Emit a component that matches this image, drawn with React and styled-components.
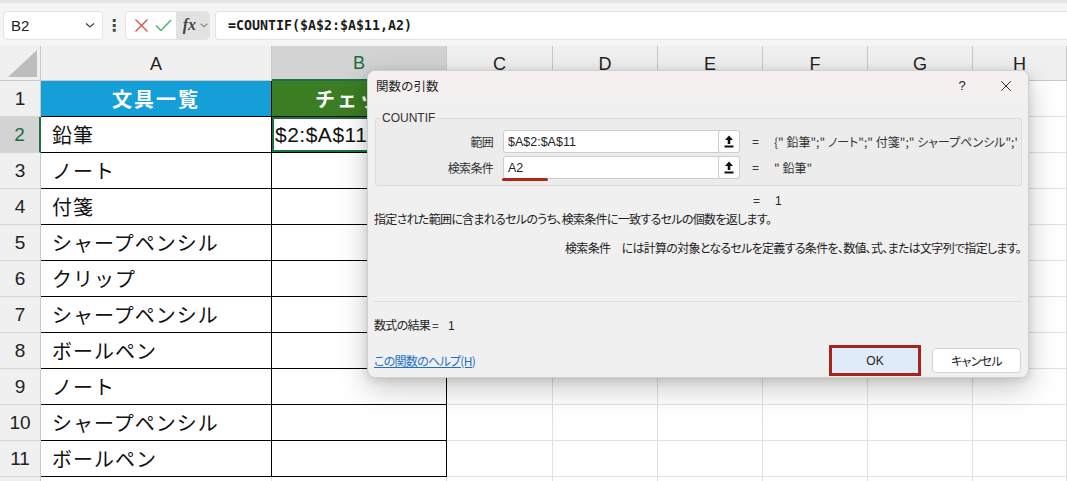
import React from "react";
import styled, { createGlobalStyle, css } from "styled-components";

const GlobalStyle = createGlobalStyle`
  html, body {
    margin: 0;
    padding: 0;
    background: #ffffff;
    overflow: hidden;
  }
  body {
    font-family: "Noto Sans CJK JP", "Noto Sans", sans-serif;
  }
  * {
    box-sizing: border-box;
  }
`;

const jp = `"Noto Sans CJK JP", "Noto Sans", sans-serif`;

const Screen = styled.div`
  position: relative;
  width: 1067px;
  height: 481px;
  overflow: hidden;
  background: #fff;
`;

/* ---------- formula bar ---------- */

const FormulaBar = styled.div`
  display: flex;
  align-items: center;
  height: 46px;
  padding: 1px 0 0 3px;
  background: #f5f5f5;
  border-top: 3px solid #e4e4e4;
`;

const NameBox = styled.div`
  display: flex;
  align-items: center;
  justify-content: space-between;
  width: 100px;
  height: 29px;
  padding: 0 6px 0 7px;
  background: #fff;
  border: 1px solid #e3e3e3;
  border-radius: 4px;
  font-family: "Liberation Sans", sans-serif;
  font-size: 15px;
  color: #222;
`;

const Dots = styled.div`
  width: 22px;
  text-align: center;
  font-size: 16px;
  font-weight: bold;
  color: #444;
  font-family: "DejaVu Sans", sans-serif;
`;

const IconBox = styled.div`
  display: flex;
  align-items: center;
  width: 85px;
  height: 29px;
  padding-left: 4px;
  background: #fff;
  border: 1px solid #e3e3e3;
  border-radius: 4px;
  overflow: hidden;
`;

const IconSlot = styled.div`
  width: 24px;
  display: flex;
  justify-content: center;
`;

const FxButton = styled.div`
  display: flex;
  align-items: center;
  gap: 3px;
  height: 100%;
  margin-left: 1px;
  padding-left: 7px;
  flex: 1;
  background: #e2e2e2;
  font-family: "Liberation Serif", serif;
  font-style: italic;
  font-weight: bold;
  font-size: 16px;
  color: #444;
`;

const FormulaInput = styled.div`
  flex: 1;
  height: 29px;
  margin-left: 5px;
  padding-left: 12px;
  display: flex;
  align-items: center;
  background: #fff;
  border: 1px solid #e3e3e3;
  border-right: none;
  border-radius: 4px 0 0 4px;
  font-family: "DejaVu Sans Mono", monospace;
  font-weight: bold;
  font-size: 13.3px;
  color: #1a1a1a;
`;

/* ---------- sheet ---------- */

const Sheet = styled.div`
  display: grid;
  grid-template-columns: 41px 231px 175px 106px 105px 105px 105px 105px 1fr;
  grid-template-rows: 35px repeat(12, 36px);
`;

const Corner = styled.div`
  position: relative;
  background: #f0f0f0;
  border-right: 1px solid #c9c9c9;
  border-bottom: 1px solid #c9c9c9;
  &::after {
    content: "";
    position: absolute;
    right: 3px;
    bottom: 3px;
    width: 29px;
    height: 27px;
    background: #bdbdbd;
    clip-path: polygon(100% 0, 100% 100%, 0 100%);
  }
`;

const ColHead = styled.div`
  display: flex;
  align-items: center;
  justify-content: center;
  background: ${(p) => (p.$active ? "#d3d3d3" : "#f0f0f0")};
  color: ${(p) => (p.$active ? "#1e6b3a" : "#222")};
  border-right: 1px solid #c9c9c9;
  border-bottom: ${(p) => (p.$active ? "2px solid #1e7145" : "1px solid #c9c9c9")};
  font-family: "Liberation Sans", sans-serif;
  font-size: 18px;
  padding-top: 2px;
`;

const RowHead = styled.div`
  display: flex;
  align-items: center;
  justify-content: center;
  background: ${(p) => (p.$active ? "#d3d3d3" : "#f0f0f0")};
  color: ${(p) => (p.$active ? "#1e6b3a" : "#222")};
  border-right: ${(p) => (p.$active ? "2px solid #1e7145" : "1px solid #c9c9c9")};
  border-bottom: 1px solid #d6d6d6;
  font-family: "Liberation Sans", sans-serif;
  font-size: 19px;
`;

const Cell = styled.div`
  display: flex;
  align-items: center;
  overflow: hidden;
  white-space: nowrap;
  padding-left: 11px;
  font-family: ${jp};
  font-size: 20px;
  letter-spacing: 1px;
  color: #111;
  border-right: 1px solid ${(p) => (p.$table ? "#000" : "#e1e1e1")};
  border-bottom: 1px solid ${(p) => (p.$table ? "#000" : "#e1e1e1")};
  background: ${(p) => p.$fill || "#fff"};
  ${(p) =>
    p.$header &&
    css`
      justify-content: center;
      padding-left: 0;
      color: #fff;
      font-weight: bold;
      letter-spacing: 2px;
    `}
  ${(p) =>
    p.$active &&
    css`
      box-shadow: inset 0 0 0 2px #1e7145;
      padding-left: 3px;
      font-family: "Liberation Sans", sans-serif;
      font-size: 21px;
      letter-spacing: 0.5px;
    `}
`;

/* ---------- dialog ---------- */

const Dialog = styled.div`
  position: absolute;
  left: 367px;
  top: 70px;
  width: 662px;
  height: 308px;
  display: flex;
  flex-direction: column;
  background: #f0f0f0;
  border: 1px solid #cfcfcf;
  border-radius: 8px;
  box-shadow: 0 10px 30px rgba(0, 0, 0, 0.22), 0 2px 8px rgba(0, 0, 0, 0.12);
  font-family: ${jp};
  font-size: 12px;
  line-height: 16px;
  letter-spacing: -0.7px;
  color: #222;
  font-feature-settings: "palt";
  overflow: hidden;
`;

const TitleBar = styled.div`
  display: flex;
  align-items: center;
  height: 30px;
  padding-left: 8px;
  background: #f4f0f0;
  font-size: 12.5px;
  letter-spacing: 0;
  font-feature-settings: normal;
`;

const TitleText = styled.div`
  flex: 1;
`;

const TitleButton = styled.div`
  width: 44px;
  display: flex;
  justify-content: center;
  font-family: "Liberation Sans", sans-serif;
  font-size: 13px;
  color: #222;
`;

const Body = styled.div`
  display: flex;
  flex-direction: column;
  flex: 1;
  padding: 0 6px 0 6px;
`;

const Group = styled.fieldset`
  margin: 9px 0 0 1px;
  padding: 4px 0 0 0;
  height: 76px;
  width: 647px;
  border: 1px solid #dcdcdc;
  border-radius: 2px;
  background: #ececec;
  overflow: hidden;
  min-width: 0;
`;

const Legend = styled.legend`
  margin-left: 4px;
  padding: 0 2px;
  font-family: "Liberation Sans", sans-serif;
  font-size: 12px;
  letter-spacing: 0;
  color: #333;
`;

const ArgRow = styled.div`
  display: flex;
  align-items: center;
  height: 23px;
  margin-bottom: 3px;
`;

const ArgLabel = styled.div`
  flex-shrink: 0;
  width: 127px;
  text-align: right;
  padding-right: 10px;
  color: #333;
`;

const ArgInput = styled.div`
  position: relative;
  flex-shrink: 0;
  display: flex;
  align-items: center;
  width: 237px;
  height: 23px;
  padding-left: 4px;
  background: #fff;
  border: 1px solid #cdcdcd;
  border-radius: 3px;
  font-family: "Liberation Sans", sans-serif;
  font-size: 12.5px;
  letter-spacing: 0;
  color: #222;
`;

const RefButton = styled.div`
  position: absolute;
  right: -1px;
  top: -1px;
  width: 22px;
  height: 23px;
  display: flex;
  align-items: center;
  justify-content: center;
  background: #fff;
  border: 1px solid #cdcdcd;
  border-radius: 3px;
`;

const Marker = styled.div`
  position: absolute;
  left: -2px;
  bottom: -3px;
  width: 46px;
  height: 3px;
  border-radius: 2px;
  background: #b0261c;
`;

const Eq = styled.div`
  width: 34px;
  padding-left: 12px;
  flex-shrink: 0;
  font-family: "Liberation Sans", sans-serif;
  letter-spacing: 0;
  color: #333;
`;

const ArgValue = styled.div`
  min-width: 0;
  white-space: nowrap;
  overflow: hidden;
  letter-spacing: 0;
  color: #333;
`;

const ResultRow = styled.div`
  display: flex;
  height: 16px;
  margin: 7px 0 0 367px;
  font-family: "Liberation Sans", sans-serif;
`;

const Text = styled.div`
  height: 16px;
  white-space: nowrap;
  margin-top: ${(p) => p.$top || 0}px;
  text-align: ${(p) => p.$align || "left"};
  padding-right: ${(p) => p.$pr || 0}px;
`;

const ResultValue = styled.span`
  margin-left: 10px;
  font-family: "Liberation Sans", sans-serif;
  letter-spacing: 0;
`;

const Separator = styled.div`
  height: 1px;
  margin: 45px 0 0 0;
  background: #e0e0e0;
`;

const Footer = styled.div`
  display: flex;
  align-items: center;
  margin-top: 12px;
  padding-right: 1px;
`;

const HelpLink = styled.a`
  flex: 1;
  color: #1a6fc9;
  text-decoration: underline;
  cursor: pointer;
`;

const Button = styled.div`
  display: flex;
  align-items: center;
  justify-content: center;
  border-radius: 4px;
  font-size: 12px;
  ${(p) =>
    p.$primary
      ? css`
          width: 92px;
          height: 31px;
          border: 3px solid #a8231a;
          border-radius: 0;
          background: #deebf8;
          margin-right: 11px;
          font-family: "Liberation Sans", sans-serif;
          letter-spacing: 0;
        `
      : css`
          width: 89px;
          height: 25px;
          border: 1px solid #d2d2d2;
          background: #fff;
        `}
`;

/* ---------- icons ---------- */

const ChevronDown = ({ size = 12, color = "#444" }) => (
  <svg width={size} height={size} viewBox="0 0 12 12">
    <path d="M2 4.5 L6 8 L10 4.5" fill="none" stroke={color} strokeWidth="1.3" />
  </svg>
);

const CrossIcon = ({ size = 15, color = "#d9534f", weight = 1.4 }) => (
  <svg width={size} height={size} viewBox="0 0 15 15">
    <path d="M1.5 1.5 L13.5 13.5 M13.5 1.5 L1.5 13.5" stroke={color} strokeWidth={weight} />
  </svg>
);

const CheckIcon = () => (
  <svg width="17" height="13" viewBox="0 0 17 13">
    <path d="M1 6.5 L6 11.5 L16 1" fill="none" stroke="#4caf6a" strokeWidth="1.4" />
  </svg>
);

const RefIcon = () => (
  <svg width="10" height="13" viewBox="0 0 10 13">
    <path d="M5 0.5 L9 5 L6.3 5 L6.3 9 L3.7 9 L3.7 5 L1 5 Z" fill="#111" />
    <rect x="0.5" y="10.5" width="9" height="2" fill="#111" />
  </svg>
);

const columns = ["A", "B", "C", "D", "E", "F", "G", "H"];
const items = [
  "鉛筆",
  "ノート",
  "付箋",
  "シャープペンシル",
  "クリップ",
  "シャープペンシル",
  "ボールペン",
  "ノート",
  "シャープペンシル",
  "ボールペン",
];

function SheetGrid() {
  const rows = [];
  for (let r = 1; r <= 12; r++) {
    rows.push(
      <RowHead key={`h${r}`} $active={r === 2}>
        {r <= 11 ? r : ""}
      </RowHead>
    );
    columns.forEach((c) => {
      const inTable = (c === "A" || c === "B") && r <= 11;
      let content = null;
      let fill;
      let header = false;
      if (r === 1 && c === "A") {
        content = "文具一覧";
        fill = "#149fd8";
        header = true;
      } else if (r === 1 && c === "B") {
        content = "チェック";
        fill = "#3b7d23";
        header = true;
      } else if (c === "A" && r >= 2 && r <= 11) {
        content = items[r - 2];
      } else if (c === "B" && r === 2) {
        content = "$2:$A$11,A2)";
      }
      rows.push(
        <Cell
          key={`${c}${r}`}
          $table={inTable}
          $fill={fill}
          $header={header}
          $active={c === "B" && r === 2}
        >
          {content}
        </Cell>
      );
    });
  }

  return (
    <Sheet>
      <Corner />
      {columns.map((c) => (
        <ColHead key={c} $active={c === "B"}>
          {c}
        </ColHead>
      ))}
      {rows}
    </Sheet>
  );
}

function ArgumentsDialog() {
  return (
    <Dialog>
      <TitleBar>
        <TitleText>関数の引数</TitleText>
        <TitleButton>?</TitleButton>
        <TitleButton>
          <CrossIcon size={12} color="#222" weight={1.2} />
        </TitleButton>
      </TitleBar>
      <Body>
        <Group>
          <Legend>COUNTIF</Legend>
          <ArgRow>
            <ArgLabel>範囲</ArgLabel>
            <ArgInput>
              $A$2:$A$11
              <RefButton>
                <RefIcon />
              </RefButton>
            </ArgInput>
            <Eq>=</Eq>
            <ArgValue>{`{" 鉛筆";" ノート";" 付箋";" シャープペンシル";'`}</ArgValue>
          </ArgRow>
          <ArgRow>
            <ArgLabel>検索条件</ArgLabel>
            <ArgInput>
              A2
              <Marker />
              <RefButton>
                <RefIcon />
              </RefButton>
            </ArgInput>
            <Eq>=</Eq>
            <ArgValue>" 鉛筆"</ArgValue>
          </ArgRow>
        </Group>
        <ResultRow>
          <Eq as="span">=</Eq>
          <span>1</span>
        </ResultRow>
        <Text $top={2}>
          指定された範囲に含まれるセルのうち、検索条件に一致するセルの個数を返します。
        </Text>
        <Text $top={13} $align="right" $pr={1}>
          検索条件　には計算の対象となるセルを定義する条件を、数値、式、または文字列で指定します。
        </Text>
        <Separator />
        <Text $top={15}>
          数式の結果 =<ResultValue>1</ResultValue>
        </Text>
        <Footer>
          <HelpLink>この関数のヘルプ(H)</HelpLink>
          <Button $primary>OK</Button>
          <Button>キャンセル</Button>
        </Footer>
      </Body>
    </Dialog>
  );
}

export default function App() {
  return (
    <>
      <GlobalStyle />
      <Screen>
        <FormulaBar>
          <NameBox>
            B2
            <ChevronDown />
          </NameBox>
          <Dots>⋮</Dots>
          <IconBox>
            <IconSlot>
              <CrossIcon />
            </IconSlot>
            <IconSlot>
              <CheckIcon />
            </IconSlot>
            <FxButton>
              fx
              <ChevronDown size={10} color="#888" />
            </FxButton>
          </IconBox>
          <FormulaInput>=COUNTIF($A$2:$A$11,A2)</FormulaInput>
        </FormulaBar>
        <SheetGrid />
        <ArgumentsDialog />
      </Screen>
    </>
  );
}
